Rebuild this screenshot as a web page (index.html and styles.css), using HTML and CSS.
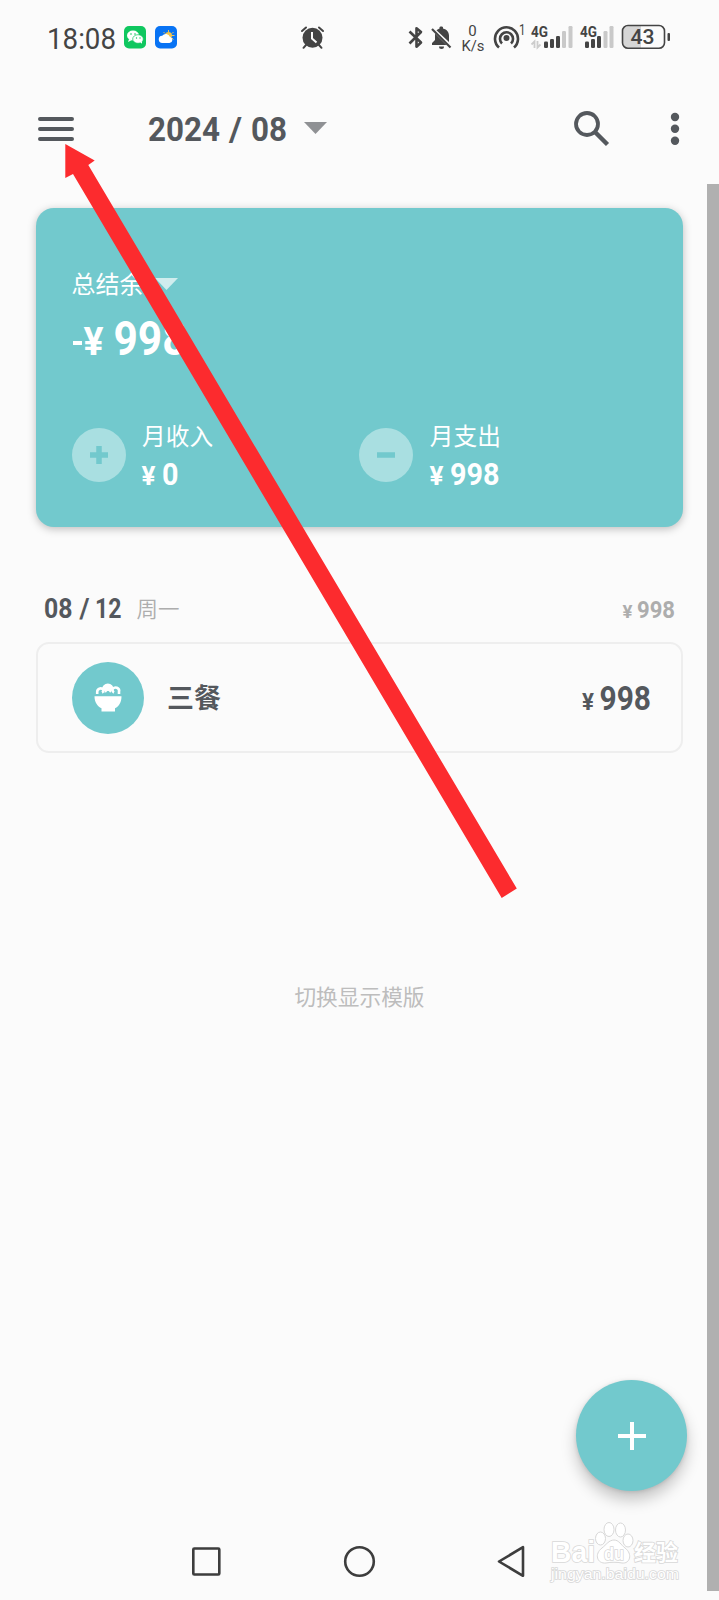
FILE: index.html
```html
<!DOCTYPE html>
<html lang="zh-CN">
<head>
<meta charset="utf-8">
<title>2024 / 08</title>
<link rel="stylesheet" href="styles.css">
</head>
<body>
<div class="screen">
  <header class="status">
    <svg class="status-row" viewBox="0 0 719 72" width="719" height="72">
      <text class="clock" x="47" y="49" textLength="69" lengthAdjust="spacingAndGlyphs">18:08</text>
      <rect x="124" y="26" width="22" height="22.500" rx="5" fill="#0fc75f"/>
      <g fill="#fff"><ellipse cx="133" cy="35.500" rx="6" ry="5"/><path d="M129 39l-1 3 4-2z"/><ellipse cx="138" cy="39" rx="5.300" ry="4.300" stroke="#0fc75f" stroke-width=".7"/><path d="M140 42l2 1.800V41z"/></g>
      <g fill="#0fc75f"><circle cx="131" cy="34" r=".8"/><circle cx="135" cy="34" r=".8"/><circle cx="136.500" cy="38" r=".7"/><circle cx="140" cy="38" r=".7"/></g>
      <rect x="155" y="26" width="22" height="22.500" rx="5" fill="#0873f4"/>
      <path d="M168.500 30v2M163.500 32l1.500 1.500M173.500 32l-1.500 1.500M172 35.500h2.500M172 38l1.500 1.500" stroke="#e8c45c" stroke-width="1"/>
      <circle cx="168.500" cy="35.500" r="3.500" fill="#f3c44c"/>
      <path d="M162.500 43a3.600 3.600 0 0 1-.3-7.200 4.500 4.500 0 0 1 7.800 1.100 3.100 3.100 0 0 1-.5 6.100z" fill="#fff"/>

      <g fill="none" stroke="#444" stroke-width="2" stroke-linecap="round">
        <path d="M302 31l4-3.500M323 31l-4-3.500M306 45l-2.500 2.800M319 45l2.500 2.800"/>
      </g>
      <circle cx="312.500" cy="37.800" r="10" fill="#444"/>
      <path d="M312 32v6.500l4.500 4" fill="none" stroke="#fbfbfb" stroke-width="2"/>

      <path d="M409.500 31.500L421 42.500l-4.500 4.200V28.300l4.500 3.700-11.500 11.500" fill="none" stroke="#444" stroke-width="2.600" stroke-linejoin="round"/>
      <path d="M432 45v-2l3-3v-6.500l11.500 11.500zM436.500 30.300c1-1 2-1.500 3-1.800V27.500c0-1.300 3.500-1.300 3.500 0v1c4 1 6 3.800 6 7.500v6z" fill="#444"/>
      <path d="M432 29l18.500 18.500" stroke="#444" stroke-width="2.200"/>
      <path d="M439 46.500h5a2.500 2.500 0 0 1-5 0z" fill="#444"/>
      <text class="net" x="472.500" y="36" text-anchor="middle" font-size="15">0</text>
      <text class="net" x="461.500" y="50.500" font-size="15.500" textLength="23" lengthAdjust="spacingAndGlyphs">K/s</text>
      <g fill="none" stroke="#444" stroke-width="2.600">
        <path d="M499 47.500a11.500 11.500 0 1 1 15 0"/><path d="M502 43.500a6.500 6.500 0 1 1 9 0"/>
      </g>
      <circle cx="506.500" cy="38" r="3" fill="#444"/>
      <text class="net" x="519" y="35" font-size="14" textLength="6.500" lengthAdjust="spacingAndGlyphs">1</text>
      <text class="gen" x="531" y="37" textLength="17" lengthAdjust="spacingAndGlyphs">4G</text>
      <path d="M534.500 48v-6.500l-3 3M537.500 41v6.500l3-3" fill="none" stroke="#ccc" stroke-width="1.800"/>
      <g fill="#444"><rect x="544" y="41.500" width="4" height="6.500" rx="1.200"/><rect x="550" y="39" width="4" height="9" rx="1.200"/><rect x="556" y="36" width="4" height="12" rx="1.200"/></g>
      <g fill="#c9c9c9"><rect x="562" y="31" width="4" height="17" rx="1.200"/><rect x="568.500" y="26" width="4" height="22" rx="1.200"/></g>
      <text class="gen" x="580" y="37" textLength="17" lengthAdjust="spacingAndGlyphs">4G</text>
      <g fill="#444"><rect x="585" y="41.500" width="4" height="6.500" rx="1.200"/><rect x="591" y="39" width="4" height="9" rx="1.200"/><rect x="597" y="36" width="4" height="12" rx="1.200"/></g>
      <g fill="#c9c9c9"><rect x="603.500" y="31" width="4" height="17" rx="1.200"/><rect x="609.500" y="26" width="4" height="22" rx="1.200"/></g>
      <path d="M641 26h-11q-7 0-7 6v10q0 6 7 6h11z" fill="#d6d6d6"/>
      <rect x="622.500" y="25.500" width="42" height="22.800" rx="5.500" fill="none" stroke="#444" stroke-width="1.600"/>
      <rect x="667.500" y="33" width="2.500" height="8" rx="1" fill="#444"/>
      <text class="battery" x="630.500" y="44" textLength="24" lengthAdjust="spacingAndGlyphs">43</text>
    </svg>
  </header>

  <nav class="toolbar">
    <svg class="menu" width="36" height="26" viewBox="0 0 36 26"><path d="M2 3h32M2 13h32M2 23h32" stroke="#54585d" stroke-width="4" stroke-linecap="round"/></svg>
    <svg class="title" width="141" height="40">
      <text class="din" x="0" y="28" font-size="34" textLength="72" lengthAdjust="spacingAndGlyphs">2024</text>
      <text class="din" x="81" y="28" font-size="34" textLength="13" lengthAdjust="spacingAndGlyphs">/</text>
      <text class="din" x="103" y="28" font-size="34" textLength="36" lengthAdjust="spacingAndGlyphs">08</text>
    </svg>
    <svg class="caret" width="23" height="12"><path d="M0 0h23L11.500 12z" fill="#8f9194"/></svg>
    <svg class="search" width="36" height="36"><circle cx="13" cy="13" r="11" fill="none" stroke="#54585d" stroke-width="3.800"/><path d="M21.500 21.500L33.500 33.500" stroke="#54585d" stroke-width="4.400"/></svg>
    <svg class="more" width="10" height="34" fill="#54585d"><circle cx="5" cy="5" r="4.200"/><circle cx="5" cy="16.800" r="4.200"/><circle cx="5" cy="28.800" r="4.200"/></svg>
  </nav>

  <main class="content">
    <section class="summary">
      <div class="balance-label"><span>总结余</span><svg width="23" height="12"><path d="M0 0h23L11.500 12z" fill="#d0edee"/></svg></div>
      <svg class="balance" width="130" height="50">
        <path d="M1 26h9" stroke="#fff" stroke-width="4"/>
        <text class="din" x="11.500" y="38" font-size="38" textLength="20" lengthAdjust="spacingAndGlyphs">¥</text>
        <text class="din" x="41.500" y="38" font-size="48" textLength="73" lengthAdjust="spacingAndGlyphs">998</text>
      </svg>
      <div class="flows">
        <div class="flow">
          <span class="badge"><svg width="18" height="18"><path d="M9 0v18M0 9h18" stroke="#72c9cd" stroke-width="5.500"/></svg></span>
          <div class="flow-text"><span>月收入</span>
            <svg width="80" height="34"><text class="din" x="-.5" y="25" font-size="26" textLength="14" lengthAdjust="spacingAndGlyphs">¥</text><text class="din" x="20" y="25" font-size="31" textLength="16.500" lengthAdjust="spacingAndGlyphs">0</text></svg>
          </div>
        </div>
        <div class="flow">
          <span class="badge"><svg width="18" height="18"><path d="M0 9h18" stroke="#72c9cd" stroke-width="5.500"/></svg></span>
          <div class="flow-text"><span>月支出</span>
            <svg width="80" height="34"><text class="din" x="-.5" y="25" font-size="26" textLength="14" lengthAdjust="spacingAndGlyphs">¥</text><text class="din" x="20" y="25" font-size="31" textLength="49.500" lengthAdjust="spacingAndGlyphs">998</text></svg>
          </div>
        </div>
      </div>
    </section>

    <div class="day">
      <svg width="80" height="32">
        <text class="din" x="0" y="24" font-size="27" textLength="28.500" lengthAdjust="spacingAndGlyphs">08</text>
        <text class="din" x="35.500" y="24" font-size="27" textLength="10" lengthAdjust="spacingAndGlyphs">/</text>
        <text class="din" x="51" y="24" font-size="27" textLength="26.500" lengthAdjust="spacingAndGlyphs">12</text>
      </svg>
      <span class="weekday">周一</span>
      <svg class="day-total" width="54" height="32"><text class="din" x="1.500" y="23.500" font-size="18.500" textLength="10" lengthAdjust="spacingAndGlyphs">¥</text><text class="din" x="16" y="23.500" font-size="24" textLength="38" lengthAdjust="spacingAndGlyphs">998</text></svg>
    </div>

    <article class="entry">
      <span class="category"><svg width="28" height="28" viewBox="0 0 28 28"><path d="M3.200 10V8a3.500 3.500 0 0 1 6-2.500A4.500 4.500 0 0 1 18.500 5.500 3.500 3.500 0 0 1 25 8v2M9.500 5.500c0 1.500-.5 2.500-1.500 3M18.500 5.500c0 1.500.5 2.500 1.500 3" fill="none" stroke="#fff" stroke-width="2.600"/><path d="M9.500 5a4.500 4.500 0 0 1 9 0c-.3 2-1.500 3-2.500 3.800-.8-2.300-3.200-2.300-4 0C11 8 9.800 7 9.500 5z" fill="#fff"/><path d="M.5 12.200h27c0 6-2.500 10-6.500 12v3.300H7.500v-3.300C3.500 22.200.5 18.200.5 12.200z" fill="#fff"/></svg></span>
      <span class="entry-name">三餐</span>
      <svg class="entry-amount" width="70" height="42"><text class="din" x="1" y="33" font-size="23" textLength="12" lengthAdjust="spacingAndGlyphs">¥</text><text class="din" x="18.500" y="33" font-size="33" textLength="51.500" lengthAdjust="spacingAndGlyphs">998</text></svg>
    </article>
    <p class="switch">切换显示模版</p>
  </main>

  <footer class="bottom">
    <button class="fab"><svg width="28" height="28"><path d="M14 0v28M0 14h28" stroke="#fff" stroke-width="4"/></svg></button>
    <svg class="system" width="719" height="60" viewBox="0 1530 719 60" fill="none" stroke="#3d3d3d" stroke-width="2.600" stroke-linejoin="round">
      <rect x="193.300" y="1548.500" width="26" height="26" rx="1"/><circle cx="359.500" cy="1561.500" r="14.300"/><path d="M499 1561.500l24-14.300v28.600z"/>
    </svg>
  </footer>

  <div class="scrollbar"></div>

  <svg class="watermark" width="140" height="70" viewBox="545 1518 140 70">
    <g fill="#fff" stroke="#d8d8d8" stroke-width="1">
      <ellipse cx="600.500" cy="1538.500" rx="5" ry="6.500"/><ellipse cx="609" cy="1529.500" rx="5" ry="7"/><ellipse cx="620.500" cy="1530" rx="5" ry="7"/><ellipse cx="628" cy="1540.500" rx="5" ry="6.500"/>
      <path d="M614 1540c5 0 7 5 11 8 8 6 5 16-3 15-5-1-11-1-16 0-9 1-12-9-4-15 4-3 7-8 12-8z"/>
      <g paint-order="stroke" stroke-width="1.600">
        <text class="mark" x="551" y="1562" font-size="29" textLength="44" lengthAdjust="spacingAndGlyphs">Bai</text>
        <text class="mark" x="604" y="1560" font-size="19" textLength="20" lengthAdjust="spacingAndGlyphs">du</text>
        <text class="mark" x="634" y="1560" font-size="22" textLength="44" lengthAdjust="spacingAndGlyphs">经验</text>
        <text class="mark url" x="551" y="1579" font-size="15.500" textLength="128" lengthAdjust="spacingAndGlyphs">jingyan.baidu.com</text>
      </g>
    </g>
  </svg>

  <svg class="pointer" width="719" height="1600"><path d="M65.300 144L94.700 160.500 88.300 165 516.800 888.500 501.700 898 73 174 65.300 178z" fill="#fc2b2e"/></svg>
</div>
</body>
</html>
```
FILE: styles.css
```css
* { box-sizing: border-box; }
body { margin: 0; background: #fbfbfb; }
svg { display: block; flex: none; overflow: visible; }

.screen {
  position: relative;
  display: flex;
  flex-direction: column;
  width: 719px;
  height: 1600px;
  overflow: hidden;
  color: #54585d;
  font-family: Roboto, "Noto Sans CJK SC", sans-serif;
}
.clock { font-size: 29px; fill: #444; }
.net { fill: #444; }
.gen { font-size: 14.5px; font-weight: 700; fill: #444; }
.battery { font-size: 20.5px; font-weight: 500; fill: #444; }
.din { font-family: Roboto, sans-serif; font-weight: 700; fill: currentColor; }

.toolbar {
  display: flex;
  align-items: flex-start;
  height: 136px;
  padding: 43px 39px 0 37.5px;
}
.menu { margin-top: .7px; }
.title { margin-left: 74px; margin-top: -2px; }
.caret { margin: 7px 0 0 15.5px; }
.search { margin: -4px 0 0 auto; }
.more { margin: -3px 0 0 60.5px; }

.content { flex: 1; padding: 0 36px; }
.summary {
  height: 319px;
  padding: 61px 36px 0 35.5px;
  border-radius: 18px;
  background: #72c9cd;
  box-shadow: 0 2px 8px rgba(0, 0, 0, .25);
  color: #fff;
}
.balance-label { display: flex; gap: 11.5px; height: 32px; font-size: 24px; line-height: 32px; }
.balance-label svg { margin-top: 8.5px; }
.balance { margin-top: 16px; }
.flows { display: flex; margin-top: 51px; }
.flow { display: flex; width: 288px; gap: 16.5px; }
.badge {
  display: grid;
  place-items: center;
  width: 54px;
  height: 54px;
  margin-top: 9.5px;
  border-radius: 50%;
  background: #a9dfe1;
}
.flow-text { padding-top: 3px; font-size: 23.7px; line-height: 32px; }
.flow-text span { display: block; height: 39px; }

.day { display: flex; align-items: flex-start; height: 115px; padding: 67px 8px 0; }
.weekday { margin: 1px 0 0 12.5px; color: #adadad; font-size: 21.5px; line-height: 30px; font-weight: 350; }
.day-total { margin-left: auto; color: #adadad; }

.entry {
  display: flex;
  align-items: center;
  height: 111px;
  padding: 0 30px 0 33.5px;
  border: 2px solid #eee;
  border-radius: 13px;
}
.category { display: grid; place-items: center; width: 72px; height: 72px; border-radius: 50%; background: #72c9cd; }
.entry-name { margin: 3px 0 0 23.5px; font-size: 27px; font-weight: 700; line-height: 36px; }
.entry-amount { margin-left: auto; }
.switch { margin: 229px 0 0; color: #bdbdbd; text-align: center; font-size: 21.7px; line-height: 32px; }

.bottom { display: flex; flex-direction: column; height: 220px; }
.fab {
  display: grid;
  place-items: center;
  width: 111px;
  height: 111px;
  margin: 0 32px 0 auto;
  padding: 0;
  border: 0;
  border-radius: 50%;
  background: #72c9cd;
  box-shadow: 0 9px 15px rgba(0, 0, 0, .22), 0 1px 4px rgba(0, 0, 0, .12);
}
.system { margin-top: 39px; }

.scrollbar { position: absolute; top: 184px; right: 0; width: 12px; height: 1407px; background: #b0b0b0; }
.watermark { position: absolute; left: 545px; top: 1518px; }
.mark { font-family: "Liberation Sans", "Noto Sans CJK SC", sans-serif; font-weight: 700; }
.url { font-weight: 400; }
.pointer { position: absolute; left: 0; top: 0; pointer-events: none; }
```
